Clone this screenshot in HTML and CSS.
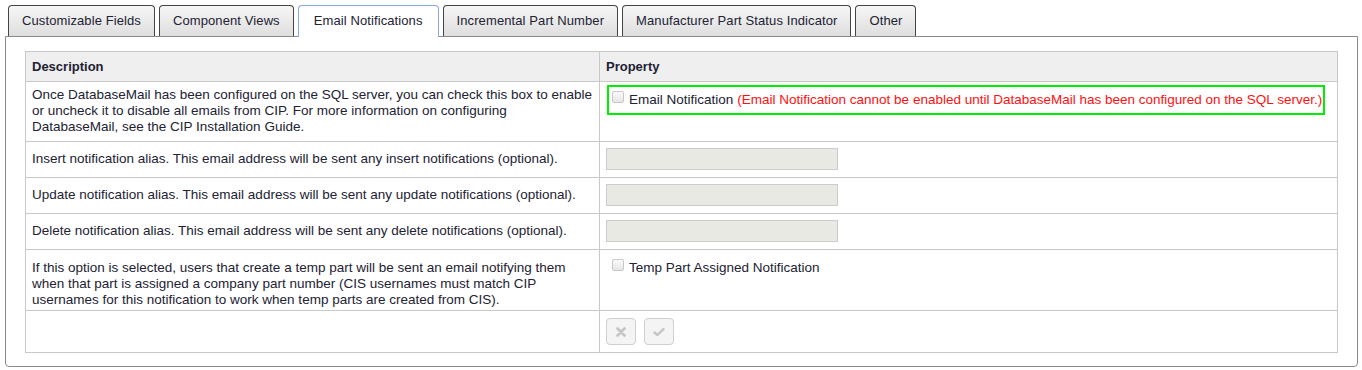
FILE: index.html
```html
<!DOCTYPE html>
<html lang="en">
<head>
  <meta charset="UTF-8">
  <title>Settings - Email Notifications</title>
  <link rel="stylesheet" href="styles.css">
</head>
<body>
  <ul class="tabs">
    <li class="tab">Customizable Fields</li>
    <li class="tab">Component Views</li>
    <li class="tab active">Email Notifications</li>
    <li class="tab">Incremental Part Number</li>
    <li class="tab">Manufacturer Part Status Indicator</li>
    <li class="tab">Other</li>
  </ul>

  <div class="panel">
    <table class="settings">
      <colgroup>
        <col class="col-desc">
        <col>
      </colgroup>
      <thead>
        <tr>
          <th>Description</th>
          <th>Property</th>
        </tr>
      </thead>
      <tbody>
        <tr>
          <td>Once DatabaseMail has been configured on the SQL server, you can check this box to enable or uncheck it to disable all emails from CIP. For more information on configuring DatabaseMail, see the CIP Installation Guide.</td>
          <td class="top">
            <div class="option highlight">
              <input type="checkbox" disabled>
              <span>Email Notification</span>
              <span class="warning">(Email Notification cannot be enabled until DatabaseMail has been configured on the SQL server.)</span>
            </div>
          </td>
        </tr>
        <tr class="field-row">
          <td>Insert notification alias. This email address will be sent any insert notifications (optional).</td>
          <td><input type="text" class="alias" disabled></td>
        </tr>
        <tr class="field-row">
          <td>Update notification alias. This email address will be sent any update notifications (optional).</td>
          <td><input type="text" class="alias" disabled></td>
        </tr>
        <tr class="field-row">
          <td>Delete notification alias. This email address will be sent any delete notifications (optional).</td>
          <td><input type="text" class="alias" disabled></td>
        </tr>
        <tr>
          <td class="lower">If this option is selected, users that create a temp part will be sent an email notifying them when that part is assigned a company part number (CIS usernames must match CIP usernames for this notification to work when temp parts are created from CIS).</td>
          <td class="top">
            <div class="option">
              <input type="checkbox" disabled>
              <span>Temp Part Assigned Notification</span>
            </div>
          </td>
        </tr>
        <tr>
          <td></td>
          <td class="actions">
            <button class="icon-btn" disabled title="Cancel">
              <svg width="10" height="10" viewBox="0 0 10 10"><path d="M1.5 1.5 L8.5 8.5 M8.5 1.5 L1.5 8.5" stroke="#c4c4c4" stroke-width="2.6" stroke-linecap="round"/></svg>
            </button>
            <button class="icon-btn" disabled title="Save">
              <svg width="12" height="10" viewBox="0 0 12 10"><path d="M1.5 5.5 L4.5 8 L10.5 2" stroke="#c4c4c4" stroke-width="2.4" fill="none" stroke-linecap="round" stroke-linejoin="round"/></svg>
            </button>
          </td>
        </tr>
      </tbody>
    </table>
  </div>
</body>
</html>
```

FILE: styles.css
```css
body {
  margin: 5px 4px 5px 5px;
  font-family: 'Liberation Sans', Arial, sans-serif;
  font-size: 13px;
  color: #222233;
  background: #fff;
}

.tabs {
  list-style: none;
  margin: 0 0 0 3px;
  padding: 0;
  display: flex;
  gap: 4px;
  position: relative;
  z-index: 1;
}

.tab {
  height: 30px;
  line-height: 30px;
  padding: 0 13px;
  border: 1px solid #444;
  border-bottom: none;
  border-radius: 4px 4px 0 0;
  background: linear-gradient(#f6f6f6, #dedede);
  color: #222233;
  letter-spacing: 0.1px;
}

.tab.active {
  background: #fff;
  border-color: #86a8e4;
  height: 31px;
  margin-bottom: -1px;
  padding: 0 15px;
}

.panel {
  border: 1px solid #8a8a8a;
  border-radius: 0 0 4px 4px;
  padding: 14px 19px 13px;
}

.settings {
  width: 100%;
  table-layout: fixed;
  border-collapse: collapse;
  font-size: 13.5px;
}

.col-desc {
  width: 574px;
}

.settings th,
.settings td {
  border: 1px solid #c8c8c8;
  padding: 5px 6px 6px;
  text-align: left;
  vertical-align: middle;
  line-height: 16px;
}

.settings th {
  background: #efefef;
  font-weight: bold;
  font-size: 13px;
  height: 17px;
  padding: 6px;
}

.field-row td {
  padding-top: 6px;
  padding-bottom: 7px;
}

.settings td.top {
  vertical-align: top;
  padding-top: 3px;
}

.settings td.lower {
  padding-top: 10px;
  padding-bottom: 2px;
}

.option {
  display: flex;
  align-items: center;
  gap: 5px;
  height: 26px;
  margin: 0 6px 0 1px;
  padding: 0 3px;
  border: 2px solid transparent;
  white-space: nowrap;
}

.option.highlight {
  border-color: #00ee00;
}

.option input {
  appearance: none;
  flex-shrink: 0;
  margin: 0;
  width: 12px;
  height: 12px;
  border: 1px solid #c8c8c8;
  border-radius: 2px;
  background: linear-gradient(#fafafa, #e6e6e6);
  position: relative;
  top: -3px;
}

.warning {
  color: #ff1010;
  margin-left: -1px;
}

.alias {
  display: block;
  width: 232px;
  height: 22px;
  box-sizing: border-box;
  margin: 0;
  border: 1px solid #cccccc;
  background: #e9e9e3;
}

.settings td.actions {
  padding: 6px;
  height: 29px;
}

.icon-btn {
  width: 30px;
  height: 27px;
  margin: 0 4px 0 0;
  padding: 0;
  border: 1px solid #cfcfcf;
  border-radius: 4px;
  background: #f4f4f4;
  display: inline-flex;
  align-items: center;
  justify-content: center;
  vertical-align: middle;
}
```
